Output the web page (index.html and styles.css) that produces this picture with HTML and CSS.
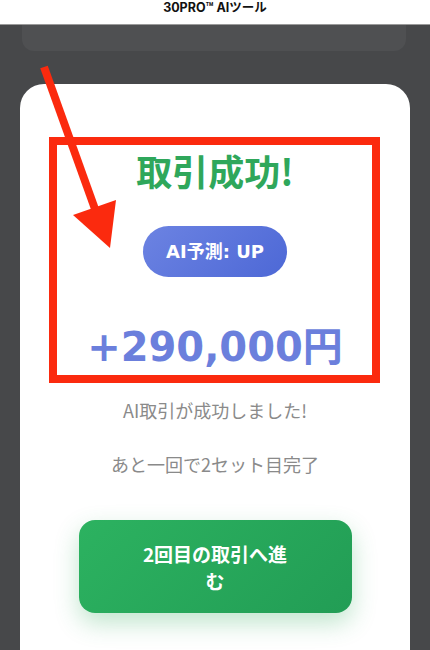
FILE: index.html
```html
<!DOCTYPE html>
<html lang="ja">
<head>
    <meta charset="UTF-8">
    <title>30PRO™ AIツール</title>
    <link rel="stylesheet" href="styles.css">
</head>
<body>
<div id="page">
    <div id="header">30PRO™ AIツール</div>
    <div id="stage">
        <div id="prev-card"></div>
        <div id="card">
            <h1 id="title">取引成功!</h1>
            <div id="pill">AI予測: UP</div>
            <div id="amount">+290,000円</div>
            <p class="note">AI取引が成功しました!</p>
            <p class="note">あと一回で2セット目完了</p>
            <button id="next-btn">2回目の取引へ進む</button>
            <div id="mark-box"></div>
        </div>
    </div>
    <svg id="mark-arrow" width="430" height="650" viewBox="0 0 430 650">
        <line x1="44" y1="67" x2="95" y2="209" stroke="#fb2a0e" stroke-width="8"/>
        <polygon points="73,215 116,200 110,248" fill="#fb2a0e"/>
    </svg>
</div>
</body>
</html>
```

FILE: styles.css
```css
* {
    margin: 0;
    padding: 0;
    box-sizing: border-box;
}

body {
    background-color: #47484a;
    font-family: "Noto Sans CJK JP", "Noto Sans", sans-serif;
    overflow: hidden;
}

#page {
    width: 430px;
    height: 650px;
    position: relative;
    overflow: hidden;
}

#header {
    height: 25px;
    background-color: #fff;
    border-bottom: 1px solid #9a9a9a;
    text-align: center;
    font-family: "Inter", "Noto Sans CJK JP", sans-serif;
    font-weight: 700;
    font-size: 12.5px;
    line-height: 16px;
    color: #111;
}

#stage {
    display: flex;
    flex-direction: column;
    padding-left: 20px;
    padding-right: 20px;
}

#prev-card {
    height: 26px;
    margin: 0 4px 0 2px;
    background-color: #4f5052;
    border-radius: 0 0 12px 12px;
}

#card {
    margin-top: 33px;
    height: 620px;
    background-color: #fff;
    border-radius: 24px;
    position: relative;
    display: flex;
    flex-direction: column;
    align-items: center;
    padding-top: 64px;
}

#title {
    font-size: 36px;
    font-weight: 700;
    line-height: 44px;
    color: #2fa75b;
}

#pill {
    margin-top: 34px;
    height: 51px;
    padding: 15px 23px;
    border-radius: 26px;
    background: linear-gradient(135deg, #6c83e2, #4d68d6);
    color: #fff;
    font-family: "DejaVu Sans", "Noto Sans CJK JP", sans-serif;
    font-weight: 700;
    font-size: 18px;
    line-height: 21px;
}

#amount {
    margin-top: 46px;
    font-family: "DejaVu Sans", "Noto Sans CJK JP", sans-serif;
    font-weight: 700;
    font-size: 40px;
    line-height: 48px;
    color: #6b7fdc;
}

.note {
    margin-top: 26px;
    font-size: 18px;
    line-height: 26px;
    color: #8a8a8a;
}

.note + .note {
    margin-top: 28px;
}

#next-btn {
    margin-top: 43px;
    width: 273px;
    height: 93px;
    padding: 0 60px;
    border: none;
    border-radius: 16px;
    background: linear-gradient(135deg, #2cb260, #229d55);
    box-shadow: 0 10px 24px rgba(46, 170, 90, 0.3);
    color: #fff;
    font-family: "Noto Sans CJK JP", sans-serif;
    font-weight: 700;
    font-size: 19px;
    line-height: 27px;
}

#mark-box {
    position: absolute;
    left: 29px;
    top: 53px;
    width: 331px;
    height: 246px;
    border: 8px solid #fb2a0e;
}

#mark-arrow {
    position: absolute;
    left: 0;
    top: 0;
}
```
